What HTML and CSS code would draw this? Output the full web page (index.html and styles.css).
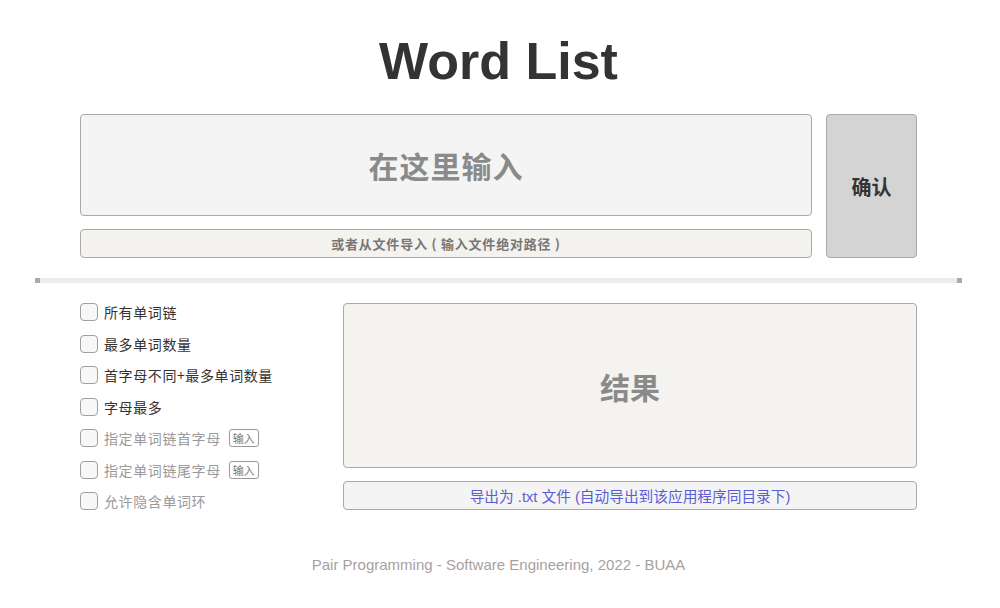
FILE: index.html
```html
<!DOCTYPE html>
<html lang="zh">
<head>
<meta charset="utf-8">
<title>Word List</title>
<link rel="stylesheet" href="styles.css">
</head>
<body>
<div class="page">
  <h1 class="title">Word List</h1>
  <div class="top-row">
    <div class="input-col">
      <div class="text-input">在这里输入</div>
      <div class="file-input">或者从文件导入 ( 输入文件绝对路径 )</div>
    </div>
    <button class="confirm">确认</button>
  </div>
  <div class="divider"><span class="cap"></span><span class="cap"></span></div>
  <div class="bottom-row">
    <div class="options">
      <label class="opt"><span class="box"></span><span>所有单词链</span></label>
      <label class="opt"><span class="box"></span><span>最多单词数量</span></label>
      <label class="opt"><span class="box"></span><span>首字母不同+最多单词数量</span></label>
      <label class="opt"><span class="box"></span><span>字母最多</span></label>
      <label class="opt off"><span class="box"></span><span>指定单词链首字母</span><span class="mini">输入</span></label>
      <label class="opt off"><span class="box"></span><span>指定单词链尾字母</span><span class="mini">输入</span></label>
      <label class="opt off"><span class="box"></span><span>允许隐含单词环</span></label>
    </div>
    <div class="result-col">
      <div class="result">结果</div>
      <button class="export">导出为 .txt 文件 (自动导出到该应用程序同目录下)</button>
    </div>
  </div>
  <footer class="footer">Pair Programming - Software Engineering, 2022 - BUAA</footer>
</div>
</body>
</html>
```

FILE: styles.css
```css
* { box-sizing: border-box; }
html, body { margin: 0; padding: 0; background: #ffffff; }
body {
  font-family: "Liberation Sans", Arial, "Noto Sans CJK SC", sans-serif;
  color: #333;
}
.page {
  width: 997px;
  padding-top: 30px;
  display: flex;
  flex-direction: column;
  align-items: center;
}
.title {
  margin: 0;
  font-size: 52px;
  line-height: 62px;
  font-weight: bold;
  color: #333;
}
.top-row {
  margin-top: 22px;
  width: 837px;
  display: flex;
  gap: 14px;
}
.input-col {
  width: 732px;
  display: flex;
  flex-direction: column;
  gap: 13px;
}
.text-input {
  height: 102px;
  border: 1px solid #a9a9a9;
  border-radius: 4px;
  background: #f4f4f4;
  display: flex;
  align-items: center;
  justify-content: center;
  font-family: "Noto Sans CJK SC", sans-serif;
  font-weight: bold;
  font-size: 30px;
  color: #8a8a8a;
  letter-spacing: 1px;
}
.file-input {
  height: 29px;
  border: 1px solid #a9a9a9;
  border-radius: 4px;
  background: #f3f2ee;
  display: flex;
  align-items: center;
  justify-content: center;
  font-family: "Noto Sans CJK SC", sans-serif;
  font-weight: bold;
  font-size: 13px;
  letter-spacing: 0.8px;
  color: #777;
}
.confirm {
  width: 91px;
  height: 144px;
  border: 1px solid #a9a9a9;
  border-radius: 4px;
  background: #d4d4d4;
  font-family: "Noto Sans CJK SC", sans-serif;
  font-weight: bold;
  font-size: 20px;
  color: #333;
  padding: 0;
}
.divider {
  margin-top: 20px;
  width: 927px;
  height: 5px;
  background: #ececec;
  display: flex;
  justify-content: space-between;
}
.cap { width: 5px; height: 5px; background: #aaaaaa; }
.bottom-row {
  margin-top: 19px;
  width: 837px;
  display: flex;
}
.options {
  width: 263px;
  display: flex;
  flex-direction: column;
  gap: 11.5px;
}
.opt {
  height: 20px;
  display: flex;
  align-items: center;
  gap: 6px;
  font-family: "Noto Sans CJK SC", sans-serif;
  font-size: 14px;
  letter-spacing: 0.6px;
  color: #333;
}
.opt.off { color: #9a9a9a; }
.box {
  width: 18px;
  height: 18px;
  border: 1px solid #a0a0a0;
  border-radius: 4px;
  background: #f7f7f7;
  flex: none;
}
.mini {
  margin-left: 2px;
  height: 18px;
  padding: 0 3px;
  border: 1px solid #9a9a9a;
  border-radius: 3px;
  font-size: 11px;
  line-height: 16px;
  letter-spacing: 0;
  color: #777;
}
.result-col {
  flex: 1;
  display: flex;
  flex-direction: column;
  gap: 13px;
  padding-top: 1px;
}
.result {
  height: 165px;
  border: 1px solid #a9a9a9;
  border-radius: 4px;
  background: #f4f3ef;
  display: flex;
  align-items: center;
  justify-content: center;
  font-family: "Noto Sans CJK SC", sans-serif;
  font-weight: bold;
  font-size: 30px;
  color: #8a8a8a;
}
.export {
  height: 29px;
  border: 1px solid #a9a9a9;
  border-radius: 4px;
  background: #f4f4f4;
  font-family: "Liberation Sans", Arial, "Noto Sans CJK SC", sans-serif;
  font-size: 14.7px;
  color: #5a5ed4;
  padding: 0;
}
.footer {
  margin-top: 45px;
  font-size: 15px;
  line-height: 17px;
  color: #a89f9f;
}
```
